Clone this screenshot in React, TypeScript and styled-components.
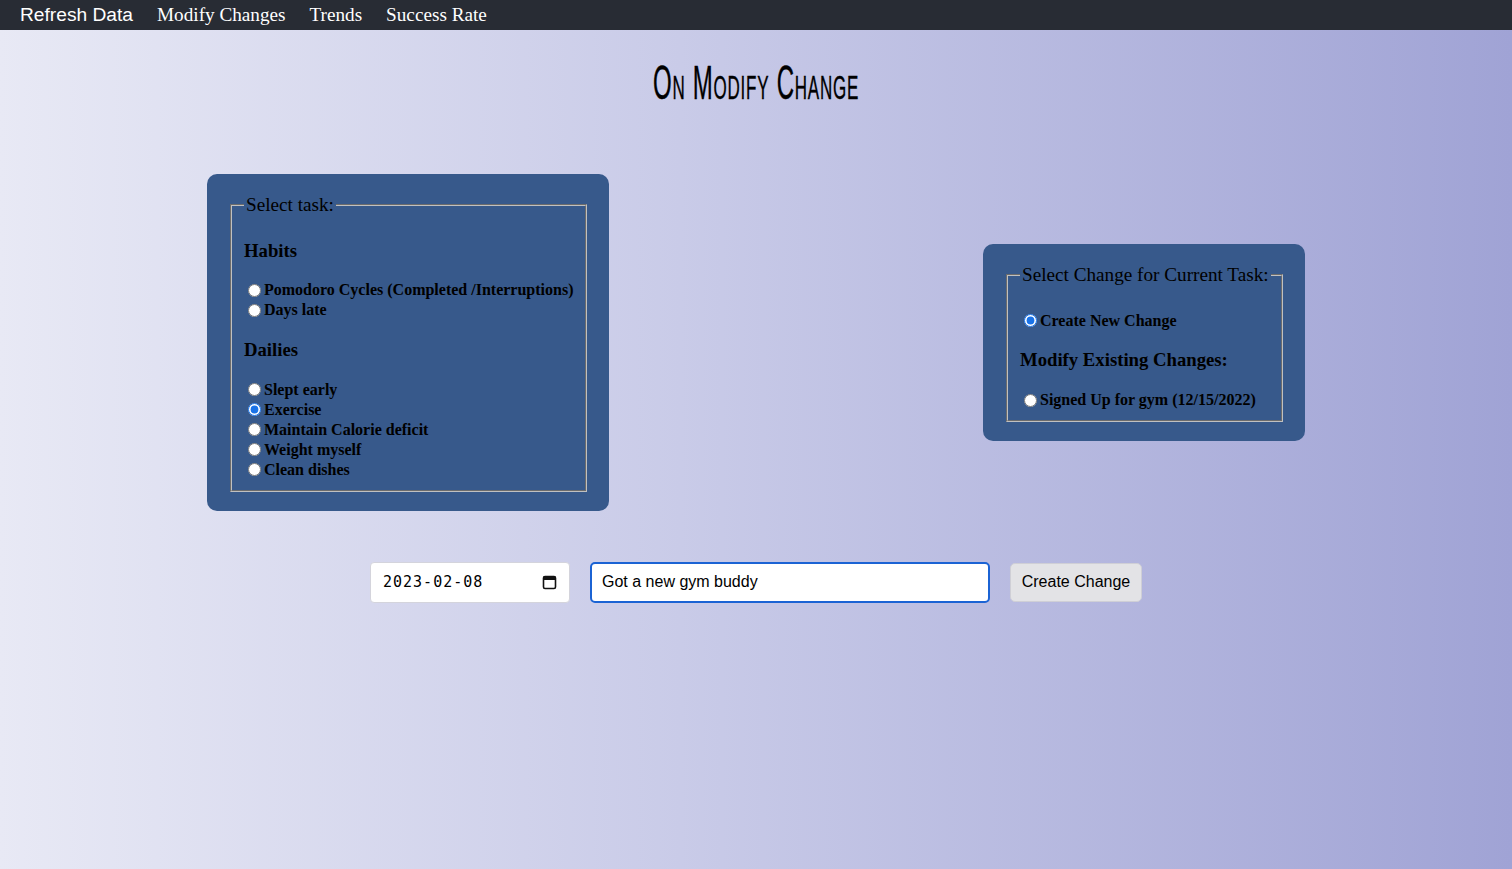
import React from "react";
import styled, { createGlobalStyle } from "styled-components";

const GlobalStyle = createGlobalStyle`
  html, body {
    margin: 0;
    padding: 0;
  }
  body {
    font-family: "Liberation Serif", "Times New Roman", serif;
    font-size: 16px;
    color: #000;
  }
`;

const Page = styled.div`
  min-height: 100vh;
  background: linear-gradient(to right, #e8e9f5 0%, #c9cbe8 45%, #a0a3d5 100%);
`;

const NavBar = styled.nav`
  height: 30px;
  background: #282c34;
  display: flex;
  align-items: center;
  gap: 24px;
  padding: 0 20px;
`;

const NavLink = styled.a<{ $brand?: boolean }>`
  color: #fff;
  text-decoration: none;
  font-size: 19.2px;
  line-height: 30px;
  font-family: ${(p) =>
    p.$brand
      ? `"Liberation Sans", Arial, sans-serif`
      : `"Liberation Serif", "Times New Roman", serif`};
  cursor: pointer;
`;

const Title = styled.h1`
  margin: 0;
  padding: 29px 0 0;
  height: 114px;
  box-sizing: border-box;
  text-align: center;
  font-family: "Liberation Sans", Arial, sans-serif;
  font-weight: 400;
  font-size: 48px;
  font-variant: small-caps;
  letter-spacing: 1.5px;
  line-height: 48px;
  transform: scaleX(0.5);
  -webkit-text-stroke: 0.4px #000;
`;

const PanelRow = styled.div`
  display: flex;
  justify-content: space-between;
  align-items: center;
  padding: 30px 207px 0;
`;

const Panel = styled.div<{ $width: number }>`
  width: ${(p) => p.$width}px;
  box-sizing: border-box;
  background: #37598b;
  border-radius: 10px;
  padding: 18px 20px 17px 21px;
`;

const FieldSet = styled.fieldset`
  margin: 2px;
  min-width: 0;
  padding: 5px 12px 10px;
  border: 2px groove #c0c0c0;
`;

const Legend = styled.legend`
  font-size: 19.2px;
  padding: 0 2px;
  white-space: nowrap;
`;

const GroupTitle = styled.h3`
  font-size: 18.72px;
  font-weight: 700;
  margin: 18.7px 0;
  line-height: 22px;
  white-space: nowrap;
`;

const OptionRow = styled.label`
  display: flex;
  align-items: center;
  height: 20px;
  font-weight: 700;
  font-size: 16px;
  white-space: nowrap;
`;

const Radio = styled.input`
  margin: 0 3px 0 4px;
  width: 13px;
  height: 13px;
  accent-color: #1a73e8;
`;

const Spacer = styled.div<{ $h: number }>`
  height: ${(p) => p.$h}px;
`;

const FormRow = styled.div`
  display: flex;
  justify-content: center;
  align-items: center;
  gap: 20px;
  margin-top: 51px;
`;

const DateBox = styled.label`
  width: 200px;
  height: 41px;
  box-sizing: border-box;
  display: flex;
  align-items: center;
  justify-content: space-between;
  padding: 0 12px 0 12px;
  background: #fff;
  border: 1px solid #d4d4dc;
  border-radius: 4px;
`;

const DateInput = styled.input`
  border: none;
  outline: none;
  background: transparent;
  width: 130px;
  padding: 0;
  font-family: "DejaVu Sans Mono", "Liberation Mono", monospace;
  font-size: 15px;
  letter-spacing: 1px;
  color: #000;
`;

const TextInput = styled.input`
  width: 400px;
  height: 41px;
  box-sizing: border-box;
  border: 2px solid #1b63d4;
  border-radius: 5px;
  padding: 0 10px;
  font-family: "Liberation Sans", Arial, sans-serif;
  font-size: 16px;
  color: #000;
  outline: none;
  background: #fff;
`;

const Button = styled.button`
  width: 132px;
  height: 39px;
  box-sizing: border-box;
  background: #e3e3e6;
  border: 1px solid #cfcfd6;
  border-radius: 5px;
  font-family: "Liberation Sans", Arial, sans-serif;
  font-size: 16px;
  color: #000;
  cursor: pointer;
`;

const CalendarIcon = () => (
  <svg width="15" height="16" viewBox="0 0 15 16" fill="none">
    <rect x="1.5" y="2.5" width="12" height="12" rx="1.5" stroke="#111" strokeWidth="1.6" />
    <rect x="1.5" y="2.5" width="12" height="3.5" fill="#111" />
  </svg>
);

const habits = ["Pomodoro Cycles (Completed /Interruptions)", "Days late"];
const dailies = [
  "Slept early",
  "Exercise",
  "Maintain Calorie deficit",
  "Weight myself",
  "Clean dishes",
];

export default function App() {
  const [task, setTask] = React.useState("Exercise");
  const [change, setChange] = React.useState("new");
  const [date, setDate] = React.useState("2023-02-08");
  const [text, setText] = React.useState("Got a new gym buddy");

  return (
    <Page>
      <GlobalStyle />
      <NavBar>
        <NavLink $brand>Refresh Data</NavLink>
        <NavLink>Modify Changes</NavLink>
        <NavLink>Trends</NavLink>
        <NavLink>Success Rate</NavLink>
      </NavBar>
      <Title>On Modify Change</Title>
      <PanelRow>
        <Panel $width={402}>
          <FieldSet>
            <Legend>Select task:</Legend>
            <GroupTitle>Habits</GroupTitle>
            {habits.map((h) => (
              <OptionRow key={h}>
                <Radio
                  type="radio"
                  name="task"
                  checked={task === h}
                  onChange={() => setTask(h)}
                />
                {h}
              </OptionRow>
            ))}
            <GroupTitle>Dailies</GroupTitle>
            {dailies.map((d) => (
              <OptionRow key={d}>
                <Radio
                  type="radio"
                  name="task"
                  checked={task === d}
                  onChange={() => setTask(d)}
                />
                {d}
              </OptionRow>
            ))}
          </FieldSet>
        </Panel>
        <Panel $width={322}>
          <FieldSet>
            <Legend>Select Change for Current Task:</Legend>
            <Spacer $h={20} />
            <OptionRow>
              <Radio
                type="radio"
                name="change"
                checked={change === "new"}
                onChange={() => setChange("new")}
              />
              Create New Change
            </OptionRow>
            <GroupTitle>Modify Existing Changes:</GroupTitle>
            <OptionRow>
              <Radio
                type="radio"
                name="change"
                checked={change === "gym"}
                onChange={() => setChange("gym")}
              />
              Signed Up for gym (12/15/2022)
            </OptionRow>
          </FieldSet>
        </Panel>
      </PanelRow>
      <FormRow>
        <DateBox>
          <DateInput value={date} onChange={(e) => setDate(e.target.value)} />
          <CalendarIcon />
        </DateBox>
        <TextInput value={text} onChange={(e) => setText(e.target.value)} />
        <Button>Create Change</Button>
      </FormRow>
    </Page>
  );
}
